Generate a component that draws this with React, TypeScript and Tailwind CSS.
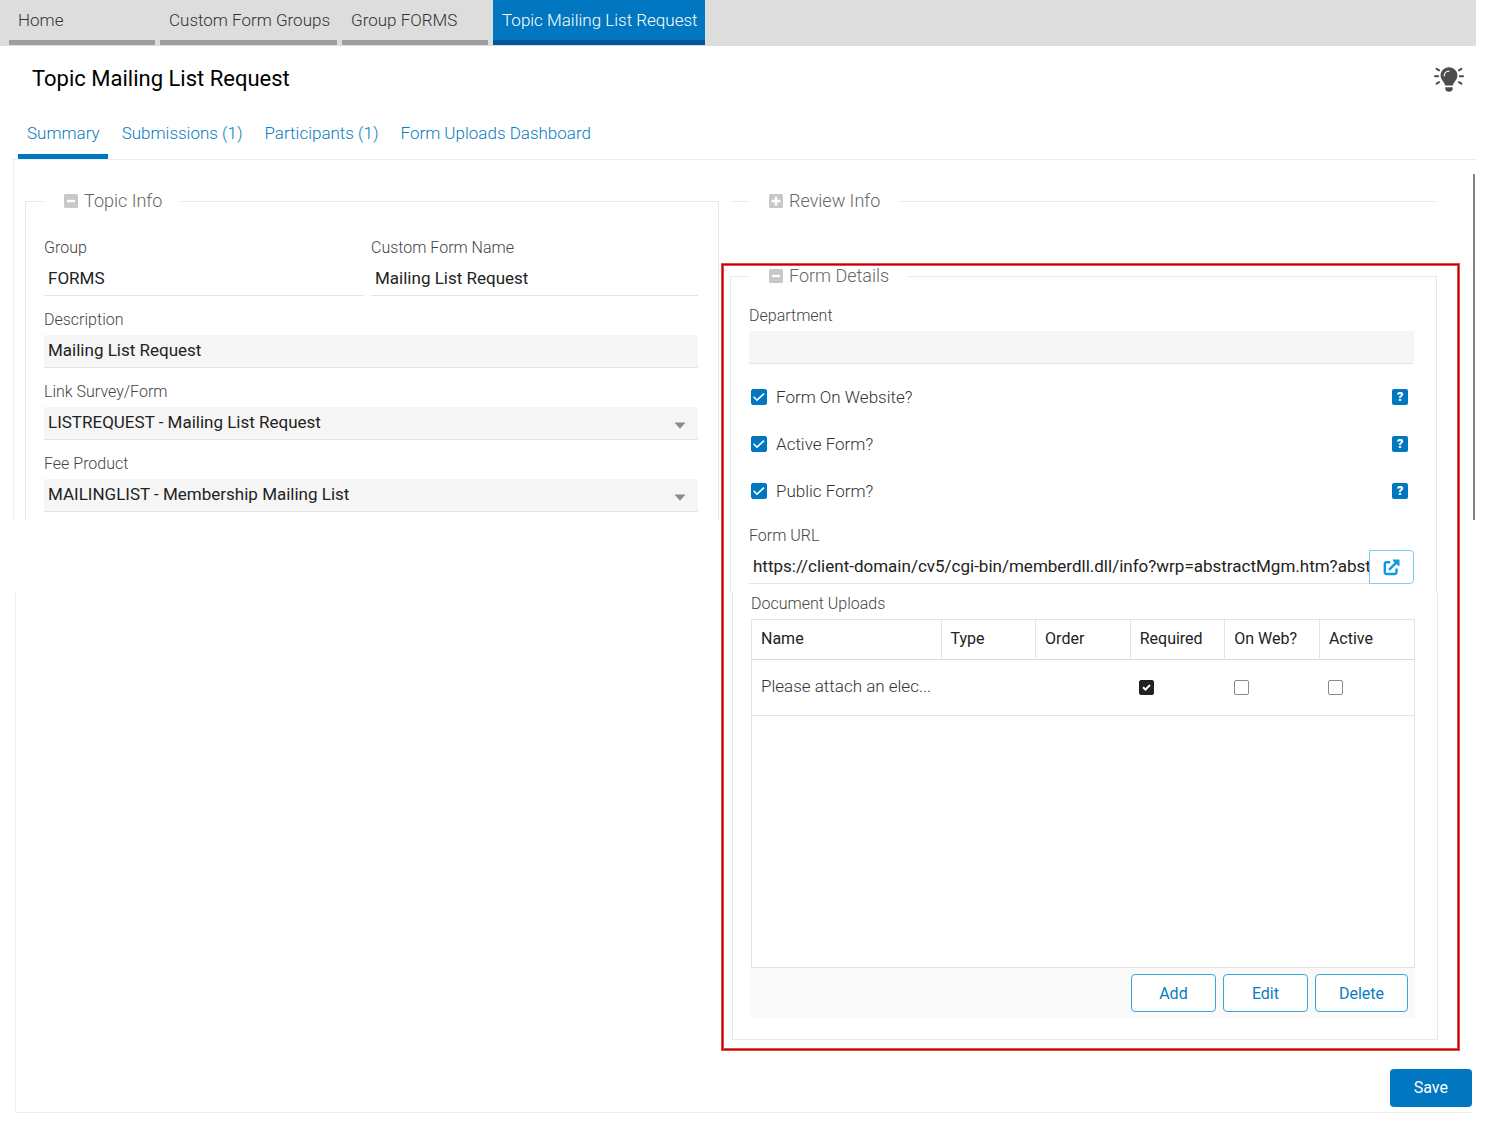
import React, { useState } from 'react'

const windowTabs = ['Home', 'Custom Form Groups', 'Group FORMS', 'Topic Mailing List Request']
const topicTabs = ['Summary', 'Submissions (1)', 'Participants (1)', 'Form Uploads Dashboard']

const labelClass = 'block text-[16px] leading-6 font-light text-[#444]'
const fieldClass =
    'block mt-[3px] h-[33px] w-full appearance-none border-b border-[#e4e4e4] pl-1 text-[17px] text-[#222] outline-none'

const Legend = ({ title, open = true }: { title: string; open?: boolean }) => (
    <legend className="flex h-[22px] items-center gap-[6px] pr-[19px] pl-5 text-[18px] leading-[22px] font-light text-[#666]">
        <svg viewBox="0 0 14 14" className="size-[14px]">
            <rect width="14" height="14" rx="1.5" className="fill-[#c8c8c8]" />
            <path
                className="stroke-white stroke-[2.4]"
                d={open ? 'M3 7h8' : 'M2.600 7h8.800M7 2.600v8.800'}
            />
        </svg>
        {title}
    </legend>
)

const TextField = ({
    id,
    label,
    value,
    readOnly,
}: {
    id: string
    label: string
    value: string
    readOnly?: boolean
}) => (
    <div>
        <label htmlFor={id} className={labelClass}>
            {label}
        </label>
        <input
            id={id}
            type="text"
            defaultValue={value}
            readOnly={readOnly}
            className={`${fieldClass} pb-[2px] ${readOnly ? 'bg-white' : 'bg-[#f6f6f6]'}`}
        />
    </div>
)

const SelectField = ({ id, label, value }: { id: string; label: string; value: string }) => (
    <div>
        <label htmlFor={id} className={labelClass}>
            {label}
        </label>
        <div className="relative">
            <select id={id} className={`${fieldClass} bg-[#f6f6f6]`}>
                <option>{value}</option>
            </select>
            <svg
                viewBox="0 0 12 7"
                className="pointer-events-none absolute top-[15px] right-3 h-[7px] w-3 fill-[#8a8a8a]"
            >
                <path d="M0.5 0.5h11L6.6 6.1a.8.8 0 0 1-1.2 0z" />
            </svg>
        </div>
    </div>
)

const CheckField = ({ id, label }: { id: string; label: string }) => {
    const [checked, setChecked] = useState(true)

    return (
        <div className="flex h-[47px] items-center gap-[9px] pr-[6px] pl-[2px]">
            <span className="relative size-4">
                <input
                    id={id}
                    type="checkbox"
                    checked={checked}
                    onChange={(e) => setChecked(e.target.checked)}
                    className="block size-4 appearance-none rounded-[2px] border border-[#0077c0] checked:bg-[#0077c0]"
                />
                <svg
                    viewBox="0 0 16 16"
                    className="pointer-events-none absolute inset-0 size-4 fill-none stroke-white stroke-[1.6]"
                >
                    <path d="M2.600 7.800l3.400 3.400 7-6.600" />
                </svg>
            </span>
            <label htmlFor={id} className="text-[17px] leading-6 font-light text-[#333]">
                {label}
            </label>
            <button
                type="button"
                aria-label={`Help for ${label}`}
                className="ml-auto flex size-4 items-center justify-center rounded-[2px] bg-[#0077c0] text-[13px] leading-4 font-black text-white"
            >
                ?
            </button>
        </div>
    )
}

const GridCheck = ({ label, initial = false }: { label: string; initial?: boolean }) => {
    const [checked, setChecked] = useState(initial)

    return (
        <span className="relative block size-[15px]">
            <input
                type="checkbox"
                aria-label={label}
                checked={checked}
                onChange={(e) => setChecked(e.target.checked)}
                className="block size-[15px] appearance-none rounded-[2px] border border-[#8a8a8a] bg-white checked:border-[#222] checked:bg-[#222]"
            />
            {checked && (
                <svg
                    viewBox="0 0 15 15"
                    className="pointer-events-none absolute inset-0 size-[15px] fill-none stroke-white stroke-2"
                >
                    <path d="M4 7.3l2.5 2.3L11 5" />
                </svg>
            )}
        </span>
    )
}

const Bulb = () => (
    <svg viewBox="0 0 30 25" className="h-[25px] w-[30px]">
        <path
            className="fill-[#4d4d4d]"
            d="M15 .3c4.8 0 8.4 3.7 8.4 8.3 0 2.2-.9 3.8-2 5.200-1.200 1.500-2.200 3-2.600 4.700h-7.600c-.4-1.700-1.400-3.200-2.600-4.700-1.100-1.400-2-3-2-5.200C6.600 4 10.200.3 15 .3zM11.300 20.200h7.400v1.500c0 1.700-1.500 3-3.700 3s-3.700-1.300-3.700-3z"
        />
        <path
            className="fill-none stroke-white stroke-[1.2]"
            strokeLinecap="round"
            d="M10.300 8.800c0-2.700 2-4.700 4.700-4.700"
        />
        <path
            className="fill-none stroke-[#4d4d4d] stroke-2"
            strokeLinecap="round"
            d="M1 9.200h3.200M25.800 9.200H29M2.600 1.800l2.500 1.500M27.400 1.800l-2.500 1.500M2.600 16.700l2.500-1.500M27.400 16.700l-2.500-1.500"
        />
    </svg>
)

const OpenIcon = () => (
    <svg viewBox="0 0 17 17" className="size-[17px] fill-none stroke-[#0a9be3] stroke-[2.4]">
        <path d="M7.200 3.300H3.600a1.800 1.800 0 0 0-1.800 1.800v8.100A1.800 1.800 0 0 0 3.600 15h8.100a1.800 1.800 0 0 0 1.800-1.800V9.600" />
        <path d="M6 10.800L14.200 2.600" />
        <path className="fill-[#0a9be3] stroke-none" d="M9.600.4h6.100a.8.8 0 0 1 .8.800v6.100l-2-1L10.400 2.300z" />
    </svg>
)

const headCell = 'border-r border-[#e4e4e4] px-[9px] text-left font-normal last:border-r-0'
const gridButton =
    'h-[38px] min-w-[85px] rounded-[4px] border border-[#3aa5dc] bg-white px-[23px] pt-[2px] text-[16px] text-[#0a7cc1]'

const UploadsGrid = () => (
    <div>
        <div className="h-[349px] border border-[#e2e2e2]">
            <table className="w-full table-fixed border-collapse text-[16px] text-[#222]">
                <colgroup>
                    <col className="w-[189px]" />
                    <col />
                    <col />
                    <col />
                    <col />
                    <col />
                </colgroup>
                <thead>
                    <tr className="h-[39px] border-b border-[#d8d8d8]">
                        {['Name', 'Type', 'Order', 'Required', 'On Web?', 'Active'].map((name) => (
                            <th key={name} className={headCell}>
                                {name}
                            </th>
                        ))}
                    </tr>
                </thead>
                <tbody>
                    <tr className="h-14 border-b border-[#e4e4e4]">
                        <td className="px-[9px] text-[17px] font-light text-[#333]">
                            Please attach an elec...
                        </td>
                        <td />
                        <td />
                        <td className="px-[9px]">
                            <GridCheck label="Required" initial />
                        </td>
                        <td className="px-[9px]">
                            <GridCheck label="On Web?" />
                        </td>
                        <td className="px-[9px]">
                            <GridCheck label="Active" />
                        </td>
                    </tr>
                </tbody>
            </table>
        </div>
        <div className="flex justify-end gap-[7px] bg-[#fafafa] px-[7px] py-[6px]">
            <button type="button" className={gridButton}>
                Add
            </button>
            <button type="button" className={gridButton}>
                Edit
            </button>
            <button type="button" className={gridButton}>
                Delete
            </button>
        </div>
    </div>
)

const FormDetails = () => (
    <section className="border border-[#c00000] pr-5 pb-[9px] pl-[7px] ring-1 ring-[#dc5050] inset-ring-1 inset-ring-[#dc5050]">
        <fieldset className="mr-px border border-b-0 border-[#e8e8e8] pr-[22px] pb-2 pl-[18px]">
            <Legend title="Form Details" />
            <div className="pt-[17px]">
                <TextField id="department" label="Department" value="" />
            </div>
            <div className="pt-[9px] pb-[10px]">
                <CheckField id="on-website" label="Form On Website?" />
                <CheckField id="active-form" label="Active Form?" />
                <CheckField id="public-form" label="Public Form?" />
            </div>
            <div className="flex items-end">
                <div className="min-w-0 flex-1">
                    <TextField
                        id="form-url"
                        label="Form URL"
                        value="https://client-domain/cv5/cgi-bin/memberdll.dll/info?wrp=abstractMgm.htm?abstractId=1"
                        readOnly
                    />
                </div>
                <button
                    type="button"
                    aria-label="Open form"
                    className="flex h-[34px] w-[45px] items-center justify-center rounded-r-[4px] border border-[#7cccf2]"
                >
                    <OpenIcon />
                </button>
            </div>
        </fieldset>
        <div className="ml-[2px] border border-t-0 border-[#e8e8e8] pr-[22px] pb-[21px] pl-[18px]">
            <h3 className={`${labelClass} mb-[3px]`}>Document Uploads</h3>
            <UploadsGrid />
        </div>
    </section>
)

const TopicInfo = () => (
    <div className="h-[360px] overflow-hidden border-l border-[#eee] pt-[30px] pr-[3px] pl-[11px]">
        <fieldset className="h-full border border-b-0 border-[#e8e8e8] pr-5 pl-[18px]">
            <Legend title="Topic Info" />
            <div className="flex flex-col gap-3 pt-6">
                <div className="grid grid-cols-[320fr_327fr] gap-[7px]">
                    <TextField id="group" label="Group" value="FORMS" readOnly />
                    <TextField
                        id="form-name"
                        label="Custom Form Name"
                        value="Mailing List Request"
                        readOnly
                    />
                </div>
                <TextField id="description" label="Description" value="Mailing List Request" />
                <SelectField
                    id="survey"
                    label="Link Survey/Form"
                    value="LISTREQUEST - Mailing List Request"
                />
                <SelectField
                    id="fee"
                    label="Fee Product"
                    value="MAILINGLIST - Membership Mailing List"
                />
            </div>
        </fieldset>
    </div>
)

export default function App() {
    return (
        <div className="bg-white pr-[18px] font-['Roboto',sans-serif]">
            <nav className="flex h-[46px] gap-[5px] bg-[#ddd] pb-px pl-[9px] text-[17px] font-light">
                {windowTabs.map((tab, i) => (
                    <a
                        key={tab}
                        href="#"
                        className={`flex min-w-[146px] items-center border-b-[5px] pt-px pr-[7px] pl-[9px] whitespace-nowrap ${
                            i === windowTabs.length - 1
                                ? 'border-[#00569d] bg-[#0077c0] text-white'
                                : 'border-[#9e9e9e] text-[#333]'
                        }`}
                    >
                        {tab}
                    </a>
                ))}
            </nav>

            <header className="flex h-16 items-center justify-between pr-3 pl-8">
                <h1 className="text-[22px] text-black">Topic Mailing List Request</h1>
                <button type="button" aria-label="Tips" className="pt-[2px]">
                    <Bulb />
                </button>
            </header>

            <nav className="flex h-[49px] gap-[5px] pl-[18px] text-[17px] font-light text-[#0a7cc1]">
                {topicTabs.map((tab, i) => (
                    <a
                        key={tab}
                        href="#"
                        className={`flex items-center border-b-[5px] pt-[3px] pr-2 pl-[9px] ${
                            i === 0 ? 'border-[#0077c0]' : 'border-transparent'
                        }`}
                    >
                        {tab}
                    </a>
                ))}
            </nav>

            <main className="ml-[13px] grid grid-cols-[709fr_754fr] border-t border-[#eee]">
                <div className="flex min-w-0 flex-col">
                    <TopicInfo />
                    <div className="mt-[71px] ml-[2px] flex-1 border-l border-[#eee]" />
                </div>
                <div className="flex min-w-0">
                    <div className="min-w-0 flex-1 pt-[30px]">
                        <fieldset className="mr-[23px] mb-[52px] ml-[9px] border-t border-[#e8e8e8] pl-[18px]">
                            <Legend title="Review Info" open={false} />
                        </fieldset>
                        <FormDetails />
                    </div>
                    <div className="mt-[14px] mr-px ml-[14px] h-[346px] w-[2px] bg-[#858585]" />
                </div>
            </main>

            <footer className="mr-[3px] ml-[15px] flex justify-end border-b border-l border-[#eee] pt-[19px] pr-px pb-[5px]">
                <button
                    type="submit"
                    className="h-[38px] min-w-[82px] rounded-[4px] bg-[#0077c0] px-6 text-[16px] text-white"
                >
                    Save
                </button>
            </footer>
        </div>
    )
}
